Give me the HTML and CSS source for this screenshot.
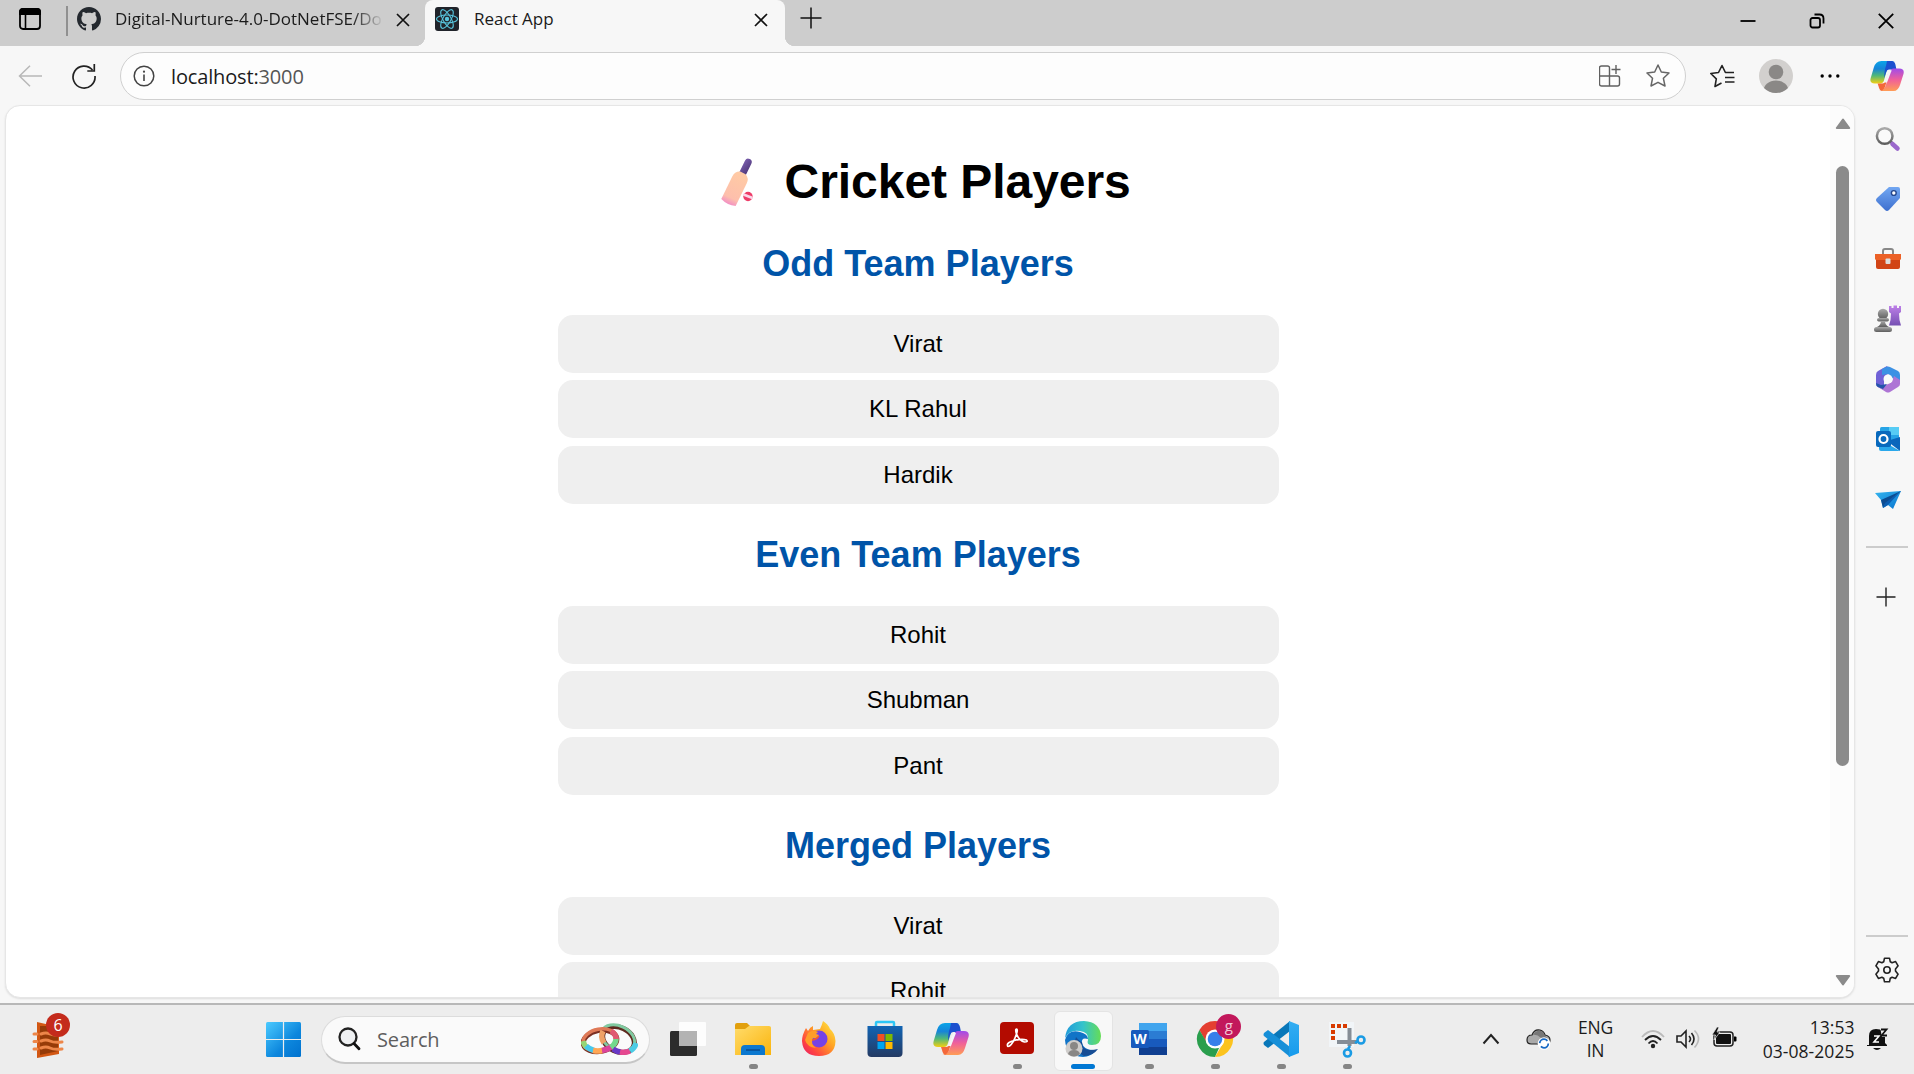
FILE: index.html
```html
<!DOCTYPE html>
<html lang="en">
<head>
<meta charset="utf-8">
<title>React App</title>
<link rel="stylesheet" href="styles.css">
</head>
<body>
<svg class="defs" width="0" height="0" aria-hidden="true">
  <defs>
    <linearGradient id="cpBlue" x1="0" y1="0" x2="0" y2="1"><stop offset="0" stop-color="#0aa5e8"/><stop offset=".35" stop-color="#1684d8"/><stop offset=".65" stop-color="#4fb878"/><stop offset="1" stop-color="#f4cf12"/></linearGradient>
    <linearGradient id="cpPink" x1="0" y1="0" x2="0" y2="1"><stop offset="0" stop-color="#a04bea"/><stop offset=".5" stop-color="#f0609a"/><stop offset="1" stop-color="#ff9d55"/></linearGradient>
    <linearGradient id="win" x1="0" y1="0" x2="1" y2="1"><stop offset="0" stop-color="#4bcaff"/><stop offset=".6" stop-color="#0d87dd"/><stop offset="1" stop-color="#0071ce"/></linearGradient>
    <linearGradient id="purple" x1="0" y1="0" x2="0" y2="1"><stop offset="0" stop-color="#be80e8"/><stop offset="1" stop-color="#7650b3"/></linearGradient>
    <linearGradient id="grey" x1="0" y1="0" x2="0" y2="1"><stop offset="0" stop-color="#aaa"/><stop offset="1" stop-color="#5d5d5d"/></linearGradient>
    <linearGradient id="tag" x1="0" y1="0" x2="0" y2="1"><stop offset="0" stop-color="#72a7f2"/><stop offset="1" stop-color="#3e70cf"/></linearGradient>
    <linearGradient id="folder" x1="0" y1="0" x2="1" y2="1"><stop offset="0" stop-color="#ffdc6b"/><stop offset="1" stop-color="#fbb40c"/></linearGradient>
    <linearGradient id="store" x1="0" y1="0" x2="0" y2="1"><stop offset="0" stop-color="#1164b4"/><stop offset="1" stop-color="#243a63"/></linearGradient>
    <linearGradient id="fox" x1="1" y1="0" x2="0" y2="1"><stop offset="0" stop-color="#fff04a"/><stop offset=".4" stop-color="#ffa423"/><stop offset=".75" stop-color="#ff4441"/><stop offset="1" stop-color="#e3196e"/></linearGradient>
    <linearGradient id="edgeTop" x1="0" y1="0" x2="1" y2="0"><stop offset="0" stop-color="#219bda"/><stop offset=".5" stop-color="#34c3cb"/><stop offset="1" stop-color="#66dd55"/></linearGradient>
    <linearGradient id="code" x1="0" y1="0" x2="0" y2="1"><stop offset="0" stop-color="#34aef2"/><stop offset="1" stop-color="#169aec"/></linearGradient>
    <linearGradient id="plane" x1="0" y1="0" x2="1" y2="1"><stop offset="0" stop-color="#35b5ef"/><stop offset="1" stop-color="#0874cf"/></linearGradient>
    <linearGradient id="handle" x1="0" y1="0" x2="1" y2="1"><stop offset="0" stop-color="#7a5fae"/><stop offset="1" stop-color="#473070"/></linearGradient>
    <linearGradient id="wood" x1="0" y1="0" x2="0" y2="1"><stop offset="0" stop-color="#ffcba4"/><stop offset=".8" stop-color="#fdbfac"/><stop offset="1" stop-color="#f28fc4"/></linearGradient>
    <symbol id="copilot" viewBox="0 0 36 34">
      <path d="M23 1h-11Q6 1 4 8L.7 19Q-1 25 5 25h6q3 0 4-4l4-14q2-6 8-5z" fill="url(#cpBlue)"/>
      <path d="M18 1h5q3 0 4 4l1 5h-8q-2 0-3 3l-2 6q0-8 2-13z" fill="#1b50cf"/>
      <path d="M13 33h12q5 0 7-7l3.500-11q1.500-6-4.500-6h-6q-3 0-4 4l-4 13q-2 7-8 7z" fill="url(#cpPink)"/>
      <path d="M18 33h-5q-3 0-4-5l-1-3h5q3 0 4-4l3-9q-1 7-3 13-2 8-6 8z" fill="#f4683a"/>
      <path d="M20 11h3l-5 13h-3z" fill="#f5f5f7"/>
    </symbol>
    <symbol id="cross" viewBox="0 0 16 16"><path d="M2 2l12 12M14 2L2 14" fill="none" stroke="#111" stroke-width="1.700"/></symbol>
  </defs>
</svg>

<header class="tabs">
  <svg class="workspace" width="24" height="24" viewBox="0 0 24 24"><rect x="2" y="2" width="20" height="20" rx="3" fill="none" stroke="#000" stroke-width="1.800"/><path d="M1 8V5q0-4 4-4h14q4 0 4 4v3z"/><path d="M7.500 7v15" stroke="#000" stroke-width="1.600"/></svg>
  <i class="tab-rule"></i>
  <svg class="github" width="24" height="24" viewBox="0 0 16 16"><path fill="#24292f" d="M8 0C3.580 0 0 3.580 0 8c0 3.540 2.290 6.530 5.470 7.590.4.070.55-.17.55-.38 0-.19-.01-.82-.01-1.490-2.010.37-2.530-.49-2.690-.94-.09-.23-.48-.94-.82-1.130-.28-.15-.68-.52-.01-.53.63-.01 1.080.58 1.230.82.72 1.210 1.870.87 2.330.66.070-.52.28-.87.51-1.070-1.780-.2-3.640-.89-3.640-3.950 0-.87.31-1.590.82-2.150-.08-.2-.36-1.020.08-2.120 0 0 .67-.21 2.200.82.64-.18 1.320-.27 2-.27s1.360.09 2 .27c1.530-1.040 2.200-.82 2.200-.82.44 1.100.16 1.920.08 2.120.51.56.82 1.270.82 2.150 0 3.070-1.870 3.750-3.650 3.950.29.25.54.73.54 1.480 0 1.070-.01 1.930-.01 2.200 0 .21.150.46.55.38A8.010 8.010 0 0016 8c0-4.420-3.580-8-8-8z"/></svg>
  <span class="tab-title faded">Digital-Nurture-4.0-DotNetFSE/Do</span>
  <svg class="tab-x" width="16" height="16"><use href="#cross"/></svg>
  <div class="tab active">
    <svg width="24" height="24" viewBox="0 0 24 24"><rect width="24" height="24" rx="3" fill="#20232a"/><g fill="none" stroke="#58c4dc" stroke-width="1.100"><ellipse cx="12" cy="12" rx="10.500" ry="4"/><ellipse cx="12" cy="12" rx="10.500" ry="4" transform="rotate(60 12 12)"/><ellipse cx="12" cy="12" rx="10.500" ry="4" transform="rotate(120 12 12)"/></g><circle cx="12" cy="12" r="2.200" fill="#58c4dc"/></svg>
    <span class="tab-title">React App</span>
    <svg class="tab-x" width="16" height="16"><use href="#cross"/></svg>
  </div>
  <svg class="new-tab" width="22" height="22" viewBox="0 0 22 22"><path d="M11 .5v21M.5 11h21" stroke="#111" stroke-width="1.500"/></svg>
  <div class="window-buttons">
    <svg width="16" height="16" viewBox="0 0 16 16"><path d="M.5 8h15" stroke="#000" stroke-width="1.800"/></svg>
    <svg width="16" height="16" viewBox="0 0 16 16" fill="none" stroke="#000" stroke-width="1.800"><rect x="1.500" y="5" width="9.500" height="9.500" rx="2"/><path d="M5.500 1.500h5q4 0 4 4v5"/></svg>
    <svg width="16" height="16" viewBox="0 0 16 16"><path d="M.8.800l14.400 14.400M15.200.800L.8 15.200" stroke="#000" stroke-width="1.800"/></svg>
  </div>
</header>

<nav class="toolbar">
  <svg class="back" width="24" height="22" viewBox="0 0 24 22" fill="none" stroke="#b8b8b8" stroke-width="1.500"><path d="M24 11H1.500M12 .8L1.500 11 12 21.200"/></svg>
  <svg class="reload" width="24" height="26" viewBox="0 0 24 26" fill="none" stroke="#222" stroke-width="1.700"><path d="M20.500 7A11 11 0 1 0 23 13M22.300 1v7h-7"/></svg>
  <div class="address">
    <svg class="info" width="22" height="22" viewBox="0 0 22 22"><circle cx="11" cy="11" r="9.800" fill="none" stroke="#444" stroke-width="1.500"/><path d="M11 9.500V16" stroke="#444" stroke-width="1.600"/><circle cx="11" cy="6.700" r="1.100" fill="#444"/></svg>
    <span class="url">localhost:<b>3000</b></span>
    <svg class="app-add" width="22" height="22" viewBox="0 0 22 22" fill="none" stroke="#606060" stroke-width="1.400"><path d="M10.500 21V3q0-2-2-2h-6q-2 0-2 2v16q0 2 2 2h16q2 0 2-2v-6q0-2-2-2H.7M17 0v9M12.500 4.500h9"/></svg>
    <svg width="24" height="24" viewBox="0 0 24 24" fill="none" stroke="#666" stroke-width="1.500" stroke-linejoin="round"><path d="M12 1l3.300 7 7.700 1-5.600 5.300L19 22l-7-3.700L5 22l1.500-7.700L1 9l7.700-1z"/></svg>
  </div>
  <svg class="favs" width="25" height="24" viewBox="0 0 25 24" fill="none" stroke="#222" stroke-width="1.600" stroke-linejoin="round"><path d="M11.500 19L5 22.500l1.300-7.700L.8 9.500l7.700-1L12 1.500l3.400 7H24M15 13.500h9.500M15 18h9.500"/></svg>
  <svg class="avatar" width="34" height="34" viewBox="0 0 34 34"><clipPath id="face"><circle cx="17" cy="17" r="17"/></clipPath><g clip-path="url(#face)"><path fill="#d2d0ce" d="M0 0h34v34H0z"/><circle cx="17" cy="13" r="7.300" fill="#8a8886"/><ellipse cx="17" cy="32" rx="12.500" ry="10.500" fill="#8a8886"/></g></svg>
  <svg class="more" width="20" height="6" viewBox="0 0 20 6"><circle cx="2.200" cy="3" r="1.700"/><circle cx="10" cy="3" r="1.700"/><circle cx="17.800" cy="3" r="1.700"/></svg>
  <svg class="copilot" width="34" height="32"><use href="#copilot"/></svg>
</nav>

<div class="workspace-row">
  <section class="viewport">
    <main class="page">
      <h1><svg class="bat" width="66" height="54" viewBox="0 0 66 54"><g transform="rotate(26 34 28)"><rect x="30.500" y="3.500" width="7" height="24" rx="3.500" fill="url(#handle)"/><path d="M31 19h6q5 2 5 8v25q-8 3-16 0V27q0-6 5-8z" fill="url(#wood)"/></g><circle cx="43" cy="43.500" r="4.700" fill="#ee3d69"/><path d="M38.500 41.500l9 3.500" stroke="#fbd5e8" stroke-width="2.800"/></svg>&nbsp;Cricket Players</h1>
      <h2>Odd Team Players</h2>
      <ul><li>Virat</li><li>KL Rahul</li><li>Hardik</li></ul>
      <h2>Even Team Players</h2>
      <ul><li>Rohit</li><li>Shubman</li><li>Pant</li></ul>
      <h2>Merged Players</h2>
      <ul><li>Virat</li><li>Rohit</li></ul>
    </main>
    <div class="scrollbar">
      <svg width="16" height="12" viewBox="0 0 16 12"><path d="M8 1.500L14.200 10H1.800z" fill="#8b8b8b" stroke="#8b8b8b" stroke-width="2" stroke-linejoin="round"/></svg>
      <i class="thumb"></i>
      <svg class="down" width="16" height="12" viewBox="0 0 16 12"><path d="M8 10.500L14.200 2H1.800z" fill="#8b8b8b" stroke="#8b8b8b" stroke-width="2" stroke-linejoin="round"/></svg>
    </div>
  </section>
  <aside class="sidebar">
    <div class="side-cell"><svg width="26" height="26" viewBox="0 0 26 26"><path d="M15 15l4 4" stroke="#666" stroke-width="3"/><circle cx="9.700" cy="10" r="7.800" fill="#fafafa" stroke="url(#grey)" stroke-width="2.500"/><path d="M17.500 18l5 4.500" stroke="#9a68cb" stroke-width="4.500" stroke-linecap="round"/></svg></div>
    <div class="side-cell"><svg width="26" height="26" viewBox="0 0 26 26"><path d="M14 1h9q2 0 2 2v9L14 24q-2 2-4 0l-8-8q-2-2 0-4z" fill="url(#tag)"/><circle cx="18.800" cy="7" r="2.400" fill="#fff" stroke="#24478e" stroke-width="1.400"/></svg></div>
    <div class="side-cell"><svg width="28" height="26" viewBox="0 0 28 26"><path d="M9 8V5q0-2 2-2h6q2 0 2 2v3" fill="none" stroke="#888" stroke-width="2"/><path d="M2 12h24v9q0 2-2 2H4q-2 0-2-2z" fill="#d14416"/><path d="M1 8h26v5q0 1-2 1H3q-2 0-2-1z" fill="#ec6127"/><rect x="11.500" y="12.500" width="5" height="5.500" rx="1" fill="#ddd"/></svg></div>
    <div class="side-cell"><svg width="28" height="28" viewBox="0 0 28 28"><path fill="url(#purple)" d="M15 1h2.500v2h2V.500h3.500V3h2V1h2v6l-2 1.500q0 7 2 12H15q2-5 2-12L15 7z"/><g fill="url(#grey)"><circle cx="9" cy="9" r="5.200"/><rect x="3" y="13" width="12" height="3.500" rx="1.700"/><path d="M7 16h4q0 4 4 6h-12q4-2 4-6z"/><rect x="0" y="22" width="18" height="5" rx="2.500"/></g></svg></div>
    <div class="side-cell"><svg width="26" height="28" viewBox="0 0 26 28"><path fill="#7061d6" d="M12 1L3 6Q1 7 1 10v9q0 2 2 3l6 3v-13l7-5z"/><path fill="#3c91e4" d="M11 2q2-1 4 0l8 4q2 1 2 4v7l-8-4-4-4-6 1 0-6z"/><path fill="#ae75d5" d="M25 15v4q0 2-2 3l-8 5q-2 1-4 0l-8-5 8-2 6-3 2-6z"/><path fill="#2554aa" d="M1 18l5 2 6-1-4 5-5-2q-2-1-2-4z"/><circle cx="13" cy="14" r="4.500" fill="#fafafa"/></svg></div>
    <div class="side-cell"><svg width="26" height="26" viewBox="0 0 26 26"><rect x="5" y="1" width="19" height="16" rx="1.500" fill="#27a4e6"/><path fill="#57ccf5" d="M14 1h10v8H14z"/><path fill="#0a66bc" d="M12 15l13-4v14z"/><path fill="#2aa8eb" d="M4 13l21 12H6q-2 0-2-2z"/><rect x="1" y="5" width="15" height="16" rx="2" fill="#0869bd"/><circle cx="8.500" cy="13" r="4" fill="none" stroke="#fff" stroke-width="2.200"/></svg></div>
    <div class="side-cell"><svg width="28" height="26" viewBox="0 0 28 26"><path fill="url(#plane)" d="M1 7l26-2-8 18-5-4-5 3-2-8z"/><path fill="#0d4c91" d="M7 14L27 5 11 18l-2 4z"/><path fill="#0b5db2" d="M11 17L27 5 14 19l-5 3z"/></svg></div>
    <i class="side-rule"></i>
    <svg class="side-plus" width="20" height="20" viewBox="0 0 20 20"><path d="M10 .5v19M.5 10h19" stroke="#222" stroke-width="1.400"/></svg>
    <i class="side-rule low"></i>
    <svg class="gear" width="26" height="26" viewBox="0 0 26 26" fill="none" stroke="#222" stroke-width="1.600" stroke-linejoin="round"><path d="M10.500 1.200h5l.8 3.600 1.800 1 3.500-1.200 2.500 4.200L21.500 12v2l2.600 3.200-2.500 4.200-3.500-1.200-1.800 1-.8 3.600h-5l-.8-3.600-1.800-1-3.500 1.200-2.500-4.200L4.500 14v-2L1.900 8.800l2.500-4.200 3.500 1.200 1.800-1z"/><circle cx="13" cy="13" r="3.200"/></svg>
  </aside>
</div>

<footer class="taskbar">
  <div class="widget">
    <svg width="34" height="40" viewBox="0 0 34 40"><path fill="#d25713" d="M5 2l22 5v27L5 38z"/><path fill="#963b08" d="M8 6h18v25L8 35z"/><g fill="none" stroke="#ed8649" stroke-width="3" stroke-linecap="round"><path d="M2 14h3M2 21.500h3M2 29h3M9 14q5-2 9 0t12 0M9 21q5-2 9 0t12 1M9 28q5-2 9 0t12 1"/></g></svg>
    <span class="count">6</span>
  </div>
  <svg class="start" width="35" height="35" viewBox="0 0 35 35"><rect width="35" height="35" rx="1.500" fill="url(#win)"/><path d="M17.500 0v35M0 17.500h35" stroke="#eee" stroke-width="1.200"/></svg>
  <div class="search">
    <svg width="23" height="24" viewBox="0 0 23 24"><circle cx="10" cy="10" r="8.500" fill="#eef0f2" stroke="#222" stroke-width="2.300"/><path d="M16 16.500l5 5.200" stroke="#111" stroke-width="2.800" stroke-linecap="round"/></svg>
    <span>Search</span>
    <svg class="rings" width="57" height="33" viewBox="0 0 57 33" fill="none"><ellipse cx="37.500" cy="16.500" rx="16.500" ry="12" transform="rotate(25 37.500 16.500)" stroke="#5d2a1f" stroke-width="5"/><ellipse cx="37" cy="15" rx="17.500" ry="12" transform="rotate(25 37 15)" stroke="#80c9a0" stroke-width="3"/><ellipse cx="19" cy="18" rx="17" ry="10.500" transform="rotate(-10 19 18)" stroke="#7c2f22" stroke-width="5"/><ellipse cx="19" cy="17" rx="17" ry="11" transform="rotate(-10 19 17)" stroke="#df7957" stroke-width="3.500"/><g stroke-width="5.500"><path d="M2 18q1 5 5 7" stroke="#96d576"/><path d="M5 23q3 3 8 4.500" stroke="#46c8ed"/><path d="M12 27.500q5 1 9.500 0" stroke="#ffa755"/><path d="M21 27.500q6-1 10-4" stroke="#db459b"/><path d="M30 24.500q5-4 5-9" stroke="#73d98c"/><path d="M35 16q0-5-5-8" stroke="#e05a72"/><path d="M23 20q-4-6-1-12" stroke="#efa267"/><path d="M32 26q4 3 8 3" stroke="#6839c6"/><path d="M39 29q5 1 10-1" stroke="#e54890"/><path d="M49 28q5-3 6-8" stroke="#4dcce5"/></g></svg>
  </div>
  <div class="apps">
    <div class="app"><svg width="38" height="38" viewBox="0 0 38 38"><rect x="2" y="11" width="27" height="25" rx="1.500" fill="#2c2c2c"/><rect x="11" y="2" width="27" height="24" rx="1" fill="#fff" opacity=".85"/><path d="M11 11h18v15H11z" fill="#b3b3b3"/></svg></div>
    <div class="app running"><svg width="38" height="38" viewBox="0 0 38 38"><path fill="#e2a00d" d="M1 5q0-2 2-2h10l4 4h18q2 0 2 2v6H1z"/><path fill="url(#folder)" d="M1 9h10l4-3h20q2 0 2 2v27H1z"/><path fill="#0c78cf" d="M7 35V29q0-4 4-4h16q4 0 4 4v6z"/><path d="M12 30h14" stroke="#074b91" stroke-width="1.500"/></svg></div>
    <div class="app"><svg width="36" height="38" viewBox="0 0 36 38"><path fill="url(#fox)" d="M22 1q5 3 7 8 5 4 5.500 12Q34 36 18 36 2 36 1 21q0-6 4-13l2 3q2-4 5-5v4l7-1q2-4 3-8z"/><circle cx="18" cy="19" r="8.500" fill="#7542e5"/><path fill="#ff9d29" d="M7 13q5-4 10-1l-2 2 3 1q-2 4-6 3-3 6 3 10-9-1-11-8z"/><path d="M11 20q4 0 7-4" stroke="#f65b2b" stroke-width="1.500" fill="none"/></svg></div>
    <div class="app"><svg width="36" height="38" viewBox="0 0 36 38"><path d="M9 8V3q0-1 1-1h16q1 0 1 1v5" fill="none" stroke="#2dc6f5" stroke-width="2.500"/><path fill="url(#store)" d="M.5 6h35v27q0 4-4 4h-27q-4 0-4-4z"/><path fill="#f25022" d="M10.500 14h7v7h-7z"/><path fill="#7fba00" d="M18.500 14h7v7h-7z"/><path fill="#00a4ef" d="M10.500 22h7v7h-7z"/><path fill="#ffb900" d="M18.500 22h7v7h-7z"/></svg></div>
    <div class="app"><svg width="36" height="34"><use href="#copilot"/></svg></div>
    <div class="app running"><svg class="raise" width="34" height="32" viewBox="0 0 34 32"><rect width="34" height="32" rx="4" fill="#b30b00"/><path d="M7.500 23.500q-1-3 7-5 7-2 12-.5 2 2-2 2-5-1-8-8-1.500-5 0-5t0 5q-3 9-7 12-2 1-2-.5z" fill="none" stroke="#fff" stroke-width="1.700"/></svg></div>
    <div class="app current"><svg width="38" height="38" viewBox="0 0 38 38"><path fill="#1174c7" d="M1 20Q4 9 16 12q8 2 8 7-7-2-6 4 2 8 14 7-5 7-13 7Q2 36 1 20z"/><path fill="#174d94" d="M12 17q-4 12 8 19 9 0 14-7-16 4-16-7-2 0-6-5z"/><path fill="url(#edgeTop)" d="M1 18Q3 1 20 1q16 1 17 15 0 9-9 9-6 0-4-5 1-8-8-9Q6 9 1 18z"/><circle cx="10" cy="28.500" r="8.500" fill="#cfcdcb"/><circle cx="10" cy="26" r="4" fill="#898785"/><path fill="#898785" d="M4 34q1-4 6-4t6 4q-6 5-12 0z"/></svg></div>
    <div class="app running"><svg width="38" height="38" viewBox="0 0 38 38"><path fill="#41a5ee" d="M9 3h28v8H9z"/><path fill="#2b7cd3" d="M9 11h28v8H9z"/><path fill="#185abd" d="M9 19h28v8H9z"/><path fill="#103f91" d="M9 27h28v8H9z"/><rect x="1" y="10" width="18" height="18" rx="1.500" fill="#185abd"/><text x="10" y="24" class="word-w">W</text></svg></div>
    <div class="app running"><svg width="38" height="38" viewBox="0 0 38 38"><path fill="#e43e31" d="M3.400 10A18 18 0 0 1 34.600 10H19v9l-8 5z"/><path fill="#2a9e4d" d="M3.400 10l8 13.500L19 28h4l-4 9A18 18 0 0 1 3.400 10z"/><path fill="#fcc31e" d="M34.600 10A18 18 0 0 1 19 37l8-13.500V10z"/><circle cx="19" cy="19" r="9.500" fill="#fff"/><circle cx="19" cy="19" r="7.300" fill="#377fea"/></svg><span class="profile">g</span></div>
    <div class="app running"><svg width="38" height="38" viewBox="0 0 38 38"><path fill="#0877b9" d="M28 1v10L6 28l-4-3q-1-2 0-3z"/><path fill="#168fd8" d="M28 37V27L6 10l-4 3q-1 2 0 3z"/><path fill="url(#code)" d="M27 1l10 4v28l-10 4q-1-1 0-2z"/></svg></div>
    <div class="app running"><svg width="40" height="38" viewBox="0 0 40 38"><path fill="#f1f5f8" d="M2 2h25v25H2z"/><path d="M6 20V6h15" fill="none" stroke="#d83b01" stroke-width="4" stroke-dasharray="4 2"/><path d="M22.500 8v18M10 22h20" stroke="#858d96" stroke-width="4"/><g fill="none" stroke="#1a9be4" stroke-width="2.600"><circle cx="34" cy="20" r="3.500"/><circle cx="20.500" cy="33" r="3.500"/><path d="M31 21l-3 2M21 29l2-3"/></g></svg></div>
  </div>
  <div class="tray">
    <svg class="chevron" width="18" height="12" viewBox="0 0 18 12"><path d="M1.500 10.500L9 2l7.500 8.500" fill="none" stroke="#222" stroke-width="2"/></svg>
    <svg class="cloud" width="25" height="22" viewBox="0 0 25 22"><path d="M5 16q-4 0-4-4 0-5 5-5 2-6 8-5 4 1 5 5 5 1 5 5 0 4-4 4z" fill="#aaa" stroke="#222" stroke-width="1.200"/><path fill="#777" d="M7 7q3-5 8-4 3 1 4 5 2 1 3 3l-7-1q-4-4-8-3z"/><circle cx="18" cy="15.500" r="6.300" fill="#fff"/><circle cx="18" cy="15.500" r="4.300" fill="none" stroke="#1769c5" stroke-width="1.800" stroke-dasharray="10 3.500"/></svg>
    <div class="lang">ENG<br>IN</div>
    <svg class="wifi" width="24" height="20" viewBox="0 0 24 20" fill="none" stroke-width="1.800"><path d="M1 8q11-12 22 0" stroke="#bbb"/><path d="M4 11q8-8 16 0M7.500 14.500q4.500-5 9 0" stroke="#222"/><circle cx="12" cy="17" r="2.200" fill="#222"/></svg>
    <svg class="sound" width="24" height="20" viewBox="0 0 24 20" fill="none" stroke="#222" stroke-width="1.600"><path d="M1 7h4l5-5v16l-5-5H1zM13 7q3 3 0 6M15.500 4q5 6 0 12"/><path d="M18.500 1.500q8 8 0 17" stroke="#bbb"/></svg>
    <svg class="battery" width="25" height="22" viewBox="0 0 25 22"><rect x="2" y="5" width="19" height="14" rx="3" fill="none" stroke="#222" stroke-width="1.500"/><rect x="4" y="7" width="15" height="10" rx="1" fill="#111"/><path d="M22 9.500h1.500q1 0 1 1v3q0 1-1 1H22z"/><path d="M5 0L0 8h3.500L2 13l6-8H5l2-5z" fill="#111" stroke="#ededed" stroke-width=".7"/></svg>
    <div class="clock">13:53<br>03-08-2025</div>
    <svg class="bell" width="23" height="24" viewBox="0 0 23 24"><path d="M2 18V9q0-7 7-7 9 0 9 8v6l2 2v1H0v-1zM6 21h8q-4 4-8 0z" fill="#111"/><path d="M13 0h9v10h-7z" fill="#ededed"/><path d="M7 9h5l-5 6h5" fill="none" stroke="#fff" stroke-width="1.600"/><path d="M14 2.500h5.500L14.500 8.500H20" fill="none" stroke="#111" stroke-width="1.800"/></svg>
  </div>
</footer>
</body>
</html>
```
FILE: styles.css
```css
* { box-sizing: border-box; }
html, body { margin: 0; height: 100%; overflow: hidden; }
body { display: flex; flex-direction: column; background: #f7f7f7; font-family: "Open Sans", "Noto Sans", sans-serif; color: #1b1b1b; }
svg { display: block; flex: none; }
i { display: block; flex: none; }
.defs { position: absolute; }

.tabs { display: flex; align-items: center; height: 46px; flex: none; padding: 0 0 8px 18px; background: #cdcdcd; }
.tab-rule { width: 2px; height: 30px; margin: 4px 9px 0 24px; background: #909090; }
.tab-title { font-size: 17px; line-height: 24px; white-space: nowrap; overflow: hidden; }
.faded { width: 269px; margin-left: 14px; -webkit-mask-image: linear-gradient(90deg, #000 88%, transparent 100%); mask-image: linear-gradient(90deg, #000 88%, transparent 100%); }
.tabs > .tab-x { margin: 1px 0 0 11px; }
.active { position: relative; display: flex; align-items: center; width: 360px; height: 46px; margin: 0 0 -8px 14px; padding: 0 16px 8px 10px; background: #f7f7f7; border-radius: 8px 8px 0 0; }
.active::before, .active::after { content: ""; position: absolute; bottom: 0; width: 10px; height: 10px; }
.active::before { right: 100%; background: radial-gradient(circle at 0 0, transparent 10px, #f7f7f7 10.500px); }
.active::after { left: 100%; background: radial-gradient(circle at 100% 0, transparent 10px, #f7f7f7 10.500px); }
.active .tab-title { margin-left: 15px; }
.active .tab-x { margin: 1px 0 0 auto; }
.new-tab { margin: -2px 0 0 15px; }
.window-buttons { display: flex; gap: 53px; margin: 3px 20px 0 auto; }

.toolbar { display: flex; align-items: center; height: 60px; flex: none; padding-left: 18px; }
.reload { margin-left: 30px; }
.address { display: flex; align-items: center; width: 1566px; height: 48px; margin-left: 24px; padding: 0 15px 0 12px; border: 1.500px solid #d0d0d0; border-radius: 24px; background: #fdfdfd; }
.url { margin: 1px 0 0 16px; font-size: 20px; line-height: 28px; letter-spacing: -.15px; }
.url b { font-weight: 400; color: #555; }
.app-add { margin: 0 25px 0 auto; }
.favs { margin-left: 24px; }
.avatar { margin-left: 24px; }
.more { margin-left: 27px; }
.copilot { margin-left: 30px; }

.workspace-row { display: flex; height: 897px; flex: none; padding-left: 5px; }
.viewport { display: flex; width: 1850px; height: 893px; margin-top: -1px; overflow: hidden; border: 1px solid #e6e6e6; border-radius: 15px; background: #fff; box-shadow: 0 1px 2px #ddd; }
.page { width: 1824px; padding: 47px 0 0; font-family: "Liberation Sans", Arial, sans-serif; color: #000; }
h1, h2, ul { margin: 0; padding: 0; }
h1 { display: flex; justify-content: center; font-size: 48px; line-height: 58px; height: 90px; letter-spacing: -.05px; }
h2 { height: 72px; color: #0054a8; font-size: 36px; line-height: 42px; text-align: center; }
ul { width: 721px; height: 219px; margin: 0 auto; list-style: none; }
li { height: 58px; margin-bottom: 7.300px; border-radius: 15px; background: #efefef; font-size: 24px; line-height: 58px; text-align: center; }
.scrollbar { display: flex; flex-direction: column; align-items: center; width: 24px; padding: 12px 1px 11px 2px; background: #fcfcfc; }
.thumb { width: 13px; height: 600px; margin-top: 36px; border-radius: 7px; background: #8b8b8b; }
.down { margin-top: auto; }

.sidebar { display: flex; flex-direction: column; align-items: center; width: 59px; padding: 3px 0 0 6px; }
.side-cell { display: grid; place-items: center; height: 60px; flex: none; }
.side-rule { width: 42px; height: 1.500px; margin: 17px 1px 0 0; background: #ccc; }
.side-plus { margin: 39px 3px 0 0; }
.side-rule.low { margin-top: 328px; height: 2px; }
.gear { margin: 20px 1px 0 0; }

.taskbar { display: flex; align-items: center; height: 71px; flex: none; border-top: 2px solid #b8b8b8; background: #ededed; }
.widget { position: relative; margin: 0 0 0 32px; }
.count { position: absolute; left: 14px; top: -7px; width: 24px; height: 24px; border-radius: 50%; background: #c42b1c; color: #fff; font-size: 16px; line-height: 24px; text-align: center; }
.start { margin: 0 0 0 200px; }
.search { display: flex; align-items: center; width: 329px; height: 48px; margin: 0 0 0 20px; padding: 0 11px 0 16px; border: 1.500px solid #dcdcdc; border-bottom: 2px solid #c6c6c6; border-radius: 24px; background: #fafafa; }
.search span { margin-left: 16px; font-size: 20px; letter-spacing: -.15px; color: #5e5e5e; }
.rings { margin-left: auto; }
.apps { display: flex; margin: -1px 0 0 4px; }
.app { position: relative; display: grid; place-items: center; width: 66.050px; height: 69px; }
.raise { margin-bottom: 2px; }
.running::after, .current::after { content: ""; position: absolute; left: 29px; bottom: 5px; width: 9px; height: 5px; border-radius: 3px; background: #858585; }
.current::before { content: ""; position: absolute; left: 4px; top: 6px; width: 57px; height: 58px; border: 1px solid #e4e4e4; border-radius: 6px; background: #f8f8f8; }
.current svg { position: relative; }
.current::after { left: 21px; width: 24px; background: #0078d4; }
.word-w { fill: #fff; font: 700 14px "Open Sans", sans-serif; text-anchor: middle; }
.profile { position: absolute; left: 34px; top: 9px; width: 25px; height: 25px; border-radius: 50%; background: #c2185b; color: #f2c7d7; font-size: 15px; line-height: 22px; text-align: center; }
.tray { display: flex; align-items: center; margin: -1px 0 0 101px; font-size: 17.500px; line-height: 23px; }
.cloud { margin-left: 26px; }
.lang { width: 48px; margin-left: 21px; text-align: center; letter-spacing: -.2px; }
.wifi { margin-left: 21px; }
.sound { margin-left: 11px; }
.battery { margin: -2px 0 0 12px; }
.clock { width: 118px; text-align: right; line-height: 24px; letter-spacing: .05px; white-space: nowrap; }
.bell { margin-left: 12px; }
```
